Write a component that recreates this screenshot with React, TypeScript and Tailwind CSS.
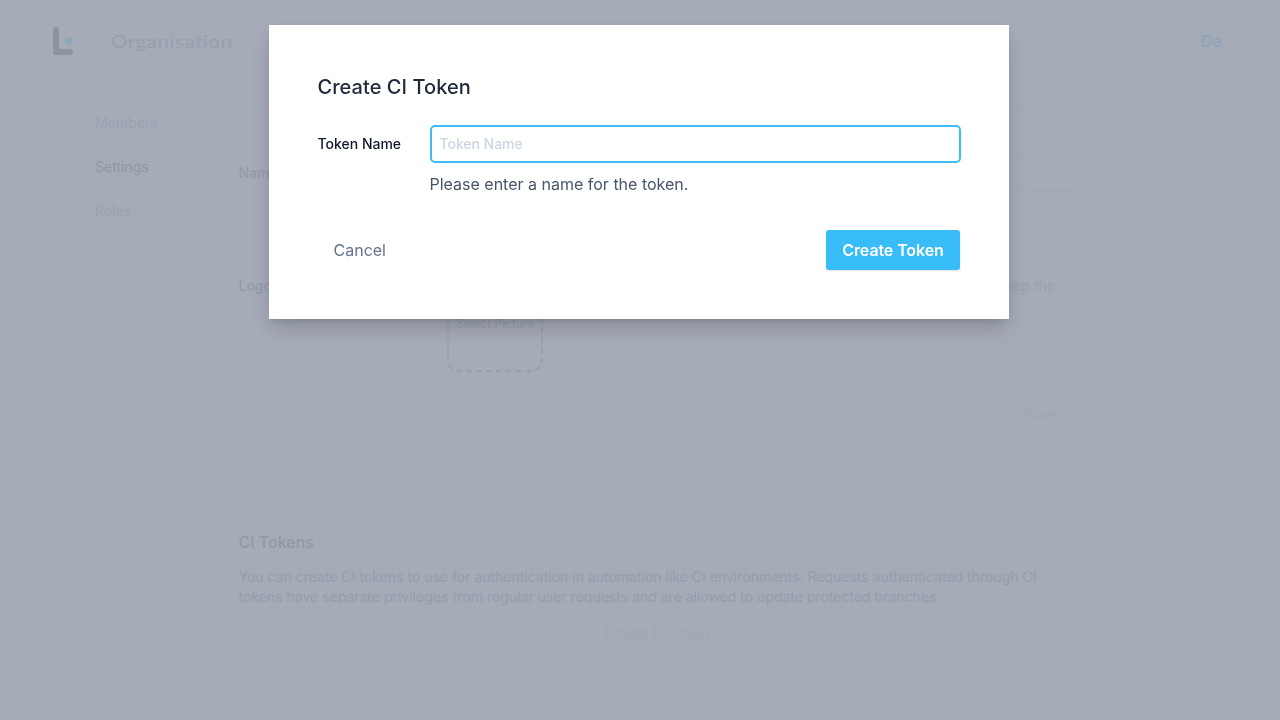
import React from "react";

function Logo() {
  return (
    <svg className="h-7 w-[22px]" viewBox="0 0 22 28" fill="none">
      <path d="M3 3V25H17" stroke="#8d939f" strokeWidth="6" strokeLinecap="round" strokeLinejoin="round" />
      <circle cx="16" cy="14" r="4" fill="#90a9b9" />
    </svg>
  );
}

function Header() {
  return (
    <header className="flex h-[82px] items-center justify-between pr-[49px] pl-[53px]">
      <div className="flex items-center gap-9">
        <Logo />
        <h1 className="origin-left scale-x-[1.15] font-[Lato] text-[18px] leading-7 tracking-[0.4px] text-[#989fac]">
          Organisation
        </h1>
      </div>
      <div className="flex size-10 items-center justify-center rounded-full bg-[#a4aab6] font-semibold tracking-[-0.2px] text-[#90a5b9]">
        De
      </div>
    </header>
  );
}

function Sidebar() {
  return (
    <nav className="flex w-[94px] flex-col gap-6 pt-[31px] text-sm text-[#9ba2af]">
      <a>Members</a>
      <a className="text-[#9096a3]">Settings</a>
      <a>Roles</a>
    </nav>
  );
}

function SettingsPage() {
  return (
    <main className="w-[934px] text-sm">
      <section className="mt-[23px] h-[376px] rounded-sm border border-[#a3a9b5] pr-12 pl-[48.5px]">
        <div className="mt-12 flex h-[38px] items-center">
          <label className="w-[208px] font-medium text-[#949ba8]">Name</label>
          <div className="h-[38px] flex-1 rounded border border-[#a1a7b3]" />
        </div>
        <div className="mt-[84px] flex">
          <label className="w-[208px] shrink-0 font-medium text-[#949ba8]">Logo</label>
          <div className="flex-1">
            <p className="pr-[19px] text-right text-[#9aa1ad]">Keep the</p>
            <div className="-mt-5 flex h-24 w-24 items-center justify-center rounded-xl border-2 border-dashed border-[#999fac] pl-px text-xs text-[#989fac]">
              Select Picture
            </div>
          </div>
        </div>
        <p className="mt-[33px] pr-[17px] text-right text-[#a1a7b3]">Save</p>
      </section>
      <section className="mt-[49px] pl-[49.5px]">
        <h2 className="text-base font-medium text-[#9299a6]">CI Tokens</h2>
        <p className="mt-[13px] w-[830px] text-[#969dab]">
          You can create CI tokens to use for authentication in automation like CI environments. Requests authenticated through CI tokens have separate privileges from regular user requests and are allowed to update protected branches.
        </p>
        <p className="mt-4 w-[836px] text-center text-[#a1a7b3]">Create CI Token</p>
      </section>
    </main>
  );
}

function Dialog() {
  return (
    <div className="fixed inset-0 flex items-start pt-[25px] pl-[269px]">
      <div
        role="dialog"
        className="h-[294px] w-[740px] bg-white pt-12 pr-12 pl-[48.5px] shadow-[0_4px_6px_-2px_rgba(0,0,0,0.1),0_10px_20px_-3px_rgba(0,0,0,0.2)]"
      >
        <h2 className="text-xl leading-7 font-medium tracking-[0.05px] text-[#1e293b]">Create CI Token</h2>
        <div className="mt-6 flex">
          <label className="w-28 shrink-0 pt-[9px] text-sm font-medium text-[#0f172a]">Token Name</label>
          <div className="flex-1">
            <input
              placeholder="Token Name"
              className="block h-[38px] w-full rounded-[5px] border-2 border-[#38bdf8] px-2 pb-0.5 text-sm font-medium tracking-[-0.05px] outline-none placeholder:text-[#cbd5e1]"
            />
            <p className="mt-[9px] text-[#475569]">Please enter a name for the token.</p>
          </div>
        </div>
        <div className="mt-[34px] flex items-center justify-between pr-px">
          <button className="px-4 py-2 text-[#64748b]">Cancel</button>
          <button className="w-[134px] rounded-[3px] bg-[#38bdf8] py-2 font-semibold tracking-[-0.1px] text-white shadow">
            Create Token
          </button>
        </div>
      </div>
    </div>
  );
}

export default function App() {
  return (
    <div className="h-screen overflow-hidden bg-[#a5abb7] font-[Inter,sans-serif]">
      <Header />
      <div className="flex pl-[95px]">
        <Sidebar />
        <SettingsPage />
      </div>
      <Dialog />
    </div>
  );
}
